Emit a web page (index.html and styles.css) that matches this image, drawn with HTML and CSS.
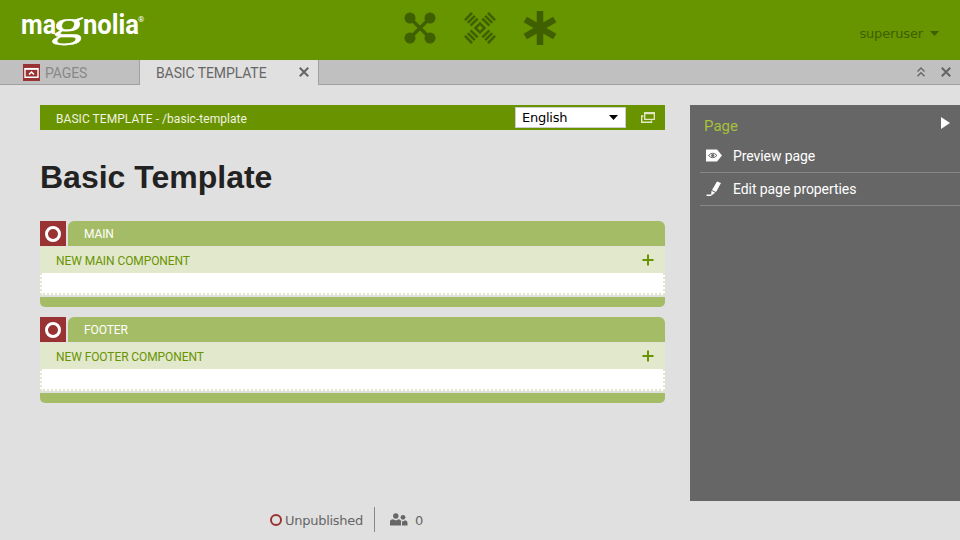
FILE: index.html
```html
<!DOCTYPE html>
<html lang="en">
<head>
<meta charset="utf-8">
<title>Magnolia</title>
<link rel="stylesheet" href="styles.css">
</head>
<body>
<header class="header">
  <svg class="logo" width="126" height="36" viewBox="20 10 126 36">
    <text class="word" x="21" y="33" textLength="35" lengthAdjust="spacingAndGlyphs">ma</text>
    <text class="swash" transform="translate(50.500 35.500) skewX(-10)" textLength="32" lengthAdjust="spacingAndGlyphs">g</text>
    <text class="word" x="83" y="33" textLength="56" lengthAdjust="spacingAndGlyphs">nolia</text>
    <text class="reg" x="138" y="21">®</text>
  </svg>
  <nav class="apps">
    <svg width="32" height="32" viewBox="0 0 32 32" fill="#3f5f00"><path d="M6 6 26 26M26 6 6 26" stroke="#3f5f00" stroke-width="3.400"/><circle cx="6" cy="6" r="5.500"/><circle cx="26" cy="6" r="5.500"/><circle cx="6" cy="26" r="5.500"/><circle cx="26" cy="26" r="5.500"/></svg>
    <svg width="32" height="32" viewBox="0 0 32 32" fill="none" stroke="#3f5f00" stroke-width="2.500"><g transform="translate(16 16) rotate(45)"><path d="M-3.200-3.200H3.200V3.200H-3.200Z"/><path id="bars" d="M-5-8.300H5M-5-12.300H5M-5-16.300H5"/><use href="#bars" transform="rotate(90)"/><use href="#bars" transform="rotate(180)"/><use href="#bars" transform="rotate(270)"/></g></svg>
    <svg class="star" width="34" height="36" viewBox="0 0 34 36" stroke="#3f5f00" stroke-width="6.500"><path d="M17 1V35M2.300 9.500 31.700 26.500M2.300 26.500 31.700 9.500"/></svg>
  </nav>
  <div class="user"><span>superuser</span><svg width="9" height="5" viewBox="0 0 9 5"><path d="M0 0H9L4.500 5Z" fill="#3f5f00"/></svg></div>
</header>
<nav class="tabs">
  <div class="tab">
    <svg width="17" height="17" viewBox="0 0 17 17"><path fill="#993333" d="M0 0H17V17H0Z"/><path fill="none" stroke="#fff" stroke-width="1.400" d="M2 5H15V13.300H2Z"/><path stroke="#fff" stroke-width="1.500" d="M1.400 4.700H15.600"/><path d="M6 10.500 8.500 8 11 10.500" fill="none" stroke="#fff" stroke-width="1.500"/></svg>
    <span class="label">PAGES</span>
  </div>
  <div class="tab active">
    <span class="label">BASIC TEMPLATE</span>
    <svg width="10" height="10" viewBox="0 0 10 10"><path d="M.8.8 9.200 9.200M9.200.8.8 9.200" stroke="#666" stroke-width="2.100"/></svg>
  </div>
  <div class="tools">
    <svg width="8" height="10" viewBox="0 0 8 10" fill="none" stroke="#666" stroke-width="1.400"><path d="M.5 4.500 4 1 7.500 4.500M.5 9.200 4 5.700 7.500 9.200"/></svg>
    <svg width="10" height="10" viewBox="0 0 10 10"><path d="M.8.8 9.200 9.200M9.200.8.8 9.200" stroke="#666" stroke-width="2.100"/></svg>
  </div>
</nav>
<div class="workspace">
  <main class="page">
    <div class="pagebar">
      <span class="path">BASIC TEMPLATE - /basic-template</span>
      <div class="lang"><span>English</span><svg width="9" height="5" viewBox="0 0 9 5"><path d="M0 0H9L4.500 5Z"/></svg></div>
      <svg class="windows" width="14" height="11" viewBox="0 0 14 11" fill="none" stroke="#e3e8c8"><path d="M3.700 7.300V1H13.300V7.300Z" stroke-width="1.300"/><path d="M3 1.200H14" stroke-width="2"/><path d="M2.500 4H.7V10.200H10.500V8.500" stroke-width="1.400"/></svg>
    </div>
    <h1>Basic Template</h1>
    <section class="area">
      <div class="areahead"><div class="status"><i class="ring"></i></div><div class="name">MAIN</div></div>
      <div class="new"><span>NEW MAIN COMPONENT</span><svg width="12" height="12" viewBox="0 0 12 12"><path d="M6 .5V11.500M.5 6H11.500" stroke="#6a9300" stroke-width="2"/></svg></div>
      <div class="slot"></div>
      <div class="areafoot"></div>
    </section>
    <section class="area">
      <div class="areahead"><div class="status"><i class="ring"></i></div><div class="name">FOOTER</div></div>
      <div class="new"><span>NEW FOOTER COMPONENT</span><svg width="12" height="12" viewBox="0 0 12 12"><path d="M6 .5V11.500M.5 6H11.500" stroke="#6a9300" stroke-width="2"/></svg></div>
      <div class="slot"></div>
      <div class="areafoot"></div>
    </section>
  </main>
  <aside class="actions">
    <div class="title"><span>Page</span><svg width="9" height="12" viewBox="0 0 9 12"><path d="M0 0 9 6 0 12Z" fill="#fff"/></svg></div>
    <div class="action"><svg width="17" height="16" viewBox="0 0 17 16"><path d="M1 1.500H12L17 7.500 12 13.500H1Z" fill="#fff"/><path d="M3.500 7.500Q7.700 3 12 7.500 7.700 12 3.500 7.500Z" fill="none" stroke="#666"/><circle cx="7.700" cy="7.500" r="1.600" fill="#666"/></svg><span>Preview page</span></div>
    <div class="action"><svg width="17" height="16" viewBox="0 0 17 16" fill="#fff"><path d="M12 .5 16 2 11 11 7 9Z"/><path d="M6.500 9.800 10.200 11.700 6 14.800Z"/><path d="M1.500 13.500H6V15H1.500Z"/></svg><span>Edit page properties</span></div>
  </aside>
</div>
<footer class="statusbar">
  <div class="state"><i class="dot"></i><span>Unpublished</span></div>
  <div class="count"><svg width="18" height="13" viewBox="0 0 18 13" fill="#666"><circle cx="5.800" cy="3" r="2.700"/><path d="M0 12.500V9Q0 6.200 3 6.200L5.800 7.600 8.600 6.200Q11 6.200 11 9V12.500Z"/><circle cx="13" cy="4.300" r="2.400"/><path d="M12 12.500V8.500L11.200 7.400 13 8.500 15 7.200Q17.500 7.400 17.500 9.500V12.500Z"/></svg><span>0</span></div>
</footer>
</body>
</html>
```
FILE: styles.css
```css
* { box-sizing: border-box; }
body { margin: 0; width: 960px; height: 540px; overflow: hidden; display: flex; flex-direction: column; background: #e0e0e0; font-family: Roboto, "Liberation Sans", sans-serif; color: #666; }
svg { display: block; flex: none; }
.header { height: 60px; display: grid; grid-template-columns: 1fr auto 1fr; align-items: center; background: #669500; }
.logo { margin: -3px 0 0 20px; fill: #fff; overflow: visible; }
.word { font: 700 27px Roboto, sans-serif; }
.swash { font: 400 38px "Liberation Serif", serif; stroke: #fff; stroke-width: .3px; }
.reg { font: 8px Roboto, sans-serif; }
.apps { display: flex; align-items: center; gap: 28px; margin-top: -4px; padding-left: 1px; }
.star { margin-left: -1px; }
.user { display: flex; align-items: center; justify-content: flex-end; gap: 7px; padding: 7px 21px 0 0; font: 13px "DejaVu Sans", sans-serif; letter-spacing: -.15px; color: #3f5f00; }
.tabs { height: 25px; display: flex; background: #c0c0c0; border-bottom: 1px solid #a0a0a0; }
.tab { width: 140px; height: 24px; display: flex; align-items: center; gap: 5px; padding: 1px 0 0 23px; border-right: 1px solid #a0a0a0; font-size: 14px; letter-spacing: -.1px; color: #888; }
.tab.active { width: 179px; height: 25px; justify-content: space-between; padding: 0 9px 1px 16px; background: #e0e0e0; color: #666; }
.tab .label { padding-top: 1px; }
.active .label { padding-top: 2px; }
.tools { display: flex; align-items: center; gap: 16px; margin-left: auto; padding-right: 9px; }
.workspace { height: 416px; display: flex; justify-content: space-between; padding: 20px 0 0 40px; }
.page { width: 625px; }
.pagebar { height: 25px; display: flex; align-items: center; background: #6a9300; padding: 0 10px 0 16px; }
.path { font-size: 12px; letter-spacing: .05px; color: #f0f4e0; padding-top: 2px; }
.lang { width: 111px; height: 21px; margin-left: auto; display: flex; align-items: center; justify-content: space-between; padding: 0 7px 0 6px; background: #fff; border: 1px solid #ccc; font: 13px "DejaVu Sans", sans-serif; letter-spacing: -.25px; color: #000; }
.windows { margin-left: 15px; }
h1 { margin: 27px 0 0; height: 64px; font: 700 32px/40px "Liberation Sans", sans-serif; color: #222; }
.area { height: 86px; margin-bottom: 10px; }
.areahead { display: flex; gap: 2px; height: 25px; }
.status { width: 26px; background: #993333; display: grid; place-items: center; }
.ring { width: 16px; height: 16px; border: 3px solid #fff; border-radius: 50%; }
.name { flex: 1; padding-left: 16px; background: #a5bc66; border-radius: 6px 6px 0 0; font-size: 12px; line-height: 26px; letter-spacing: -.1px; color: #fff; }
.new { height: 27px; display: flex; align-items: center; justify-content: space-between; padding: 1px 11px 0 16px; background: #e1e8cc; border-top: 1px solid #e0e2d8; font-size: 12px; letter-spacing: -.09px; color: #6a9300; }
.new svg { margin-top: -1px; }
.slot { height: 22px; background: #fff; border: 2px dotted #e1e8cc; border-top: 0; }
.areafoot { height: 10px; margin-top: 2px; background: #a5bc66; border-radius: 0 0 5px 5px; }
.actions { width: 270px; background: #666; padding-left: 10px; }
.title { height: 35px; display: flex; justify-content: space-between; padding: 12px 10px 0 4px; font-size: 15px; line-height: 19px; color: #a7c13a; }
.action { height: 33px; display: flex; align-items: center; gap: 11px; padding: 0 0 0 5px; border-bottom: 1px solid #888; font-size: 14px; letter-spacing: -.08px; color: #fff; }
.statusbar { height: 39px; display: flex; padding: 6px 0 0 270px; font: 13px/25px "DejaVu Sans", sans-serif; }
.state, .count { height: 25px; display: flex; align-items: center; }
.state { width: 105px; gap: 3px; border-right: 1px solid #888; letter-spacing: -.27px; }
.state span, .count span { padding-top: 2px; }
.dot { width: 12px; height: 12px; border: 2.500px solid #993333; border-radius: 50%; }
.count { gap: 7px; padding-left: 15px; }
```
